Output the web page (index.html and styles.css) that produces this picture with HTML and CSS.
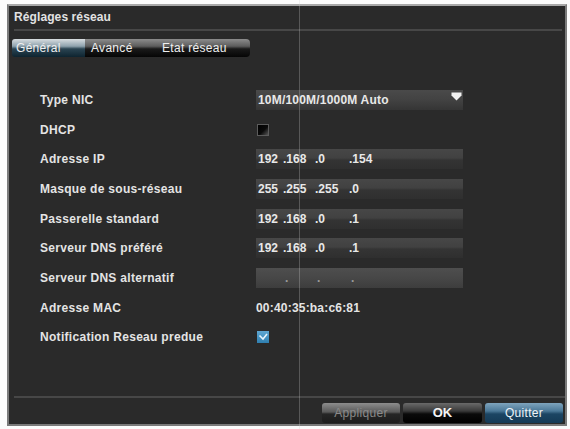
FILE: index.html
```html
<!DOCTYPE html>
<html lang="fr">
<head>
<meta charset="utf-8">
<title>Réglages réseau</title>
<link rel="stylesheet" href="styles.css">
</head>
<body>
<div class="win">
  <div class="title">Réglages réseau</div>
  <div class="sep"></div>
  <div class="tabs">
    <div class="tab tab-active">Général</div>
    <div class="tab tab-2">Avancé</div>
    <div class="tab tab-3">Etat réseau</div>
  </div>
  <div class="form">
    <div class="row">
      <div class="label">Type NIC</div>
      <div class="field select">
        <span>10M/100M/1000M Auto</span>
        <svg class="arrow" width="11" height="9" viewBox="0 0 11 9"><path d="M0.5 0.5 H10.5 V3.5 L5.5 8.5 L0.5 3.5 Z" fill="#f2f2f2"/></svg>
      </div>
    </div>
    <div class="row">
      <div class="label">DHCP</div>
      <div class="value"><span class="check-off"></span></div>
    </div>
    <div class="row">
      <div class="label">Adresse IP</div>
      <div class="field ip"><span class="o1">192</span><span class="o2">.168</span><span class="o3">.0</span><span class="o4">.154</span></div>
    </div>
    <div class="row">
      <div class="label">Masque de sous-réseau</div>
      <div class="field ip"><span class="o1">255</span><span class="o2">.255</span><span class="o3">.255</span><span class="o4">.0</span></div>
    </div>
    <div class="row">
      <div class="label">Passerelle standard</div>
      <div class="field ip"><span class="o1">192</span><span class="o2">.168</span><span class="o3">.0</span><span class="o4">.1</span></div>
    </div>
    <div class="row">
      <div class="label">Serveur DNS préféré</div>
      <div class="field ip"><span class="o1">192</span><span class="o2">.168</span><span class="o3">.0</span><span class="o4">.1</span></div>
    </div>
    <div class="row">
      <div class="label">Serveur DNS alternatif</div>
      <div class="field ip empty"><span class="o1"></span><span class="o2">.</span><span class="o3">.</span><span class="o4">.</span></div>
    </div>
    <div class="row">
      <div class="label">Adresse MAC</div>
      <div class="value mac">00:40:35:ba:c6:81</div>
    </div>
    <div class="row">
      <div class="label">Notification Reseau predue</div>
      <div class="value">
        <span class="check-on"><svg width="12" height="12" viewBox="0 0 12 12"><path d="M2.5 4.5 L6 8 L10 3" fill="none" stroke="#e8f4fb" stroke-width="1.6"/></svg></span>
      </div>
    </div>
  </div>
  <div class="footer">
    <div class="btn btn-apply">Appliquer</div>
    <div class="btn btn-ok">OK</div>
    <div class="btn btn-quit">Quitter</div>
  </div>
</div>
<div class="vline"></div>
</body>
</html>
```
FILE: styles.css
```css
html, body {
  margin: 0;
  padding: 0;
}
body {
  background: #fbfbfb;
  padding: 4px 0 0 7px;
  width: 570px;
  height: 429px;
  box-sizing: border-box;
  font-family: "Liberation Sans", Arial, sans-serif;
  color: #e6e6e6;
  overflow: hidden;
}
.win {
  width: 560px;
  height: 422px;
  box-sizing: border-box;
  border: 2px solid #7a7a7a;
  border-top-color: #a8a8a8;
  background: #2a2a2a;
  display: flex;
  flex-direction: column;
}
.title {
  height: 23px;
  line-height: 23px;
  padding-left: 5px;
  font-size: 12px;
  font-weight: bold;
  letter-spacing: 0.1px;
  color: #e2e2e2;
}
.sep {
  height: 2px;
  margin: 0 3px 0 5px;
  background: #474747;
}
.tabs {
  display: flex;
  margin: 8px 0 0 3px;
  height: 18px;
}
.tab {
  height: 18px;
  line-height: 18px;
  font-size: 12px;
  letter-spacing: 0.3px;
  color: #f0f0f0;
  background: linear-gradient(#8c8c8c 0%, #5c5c5c 40%, #1a1a1a 55%, #050505 100%);
  box-sizing: border-box;
}
.tab-active {
  width: 73px;
  padding-left: 4px;
  background: linear-gradient(#d8dde0 0%, #8fa2ad 40%, #2a4452 55%, #0e2430 100%);
  border-radius: 3px 0 0 3px;
}
.tab-2 {
  width: 68px;
  padding-left: 6px;
}
.tab-3 {
  width: 97px;
  padding-left: 9px;
  border-radius: 0 4px 4px 0;
}
.form {
  flex: 1;
  margin-top: 28px;
  padding-left: 31px;
}
.row {
  display: flex;
  align-items: center;
  height: 29.7px;
}
.label {
  width: 216px;
  font-size: 12px;
  font-weight: bold;
  letter-spacing: 0.3px;
  color: #e4e4e4;
}
.value {
  font-size: 12px;
  color: #e4e4e4;
  display: flex;
  align-items: center;
}
.mac {
  font-weight: bold;
  letter-spacing: 0.2px;
}
.field {
  width: 207px;
  height: 20px;
  box-sizing: border-box;
  display: flex;
  align-items: center;
  font-size: 12px;
  font-weight: bold;
  color: #e8e8e8;
  background: linear-gradient(#474747 0%, #414141 45%, #343434 55%, #2f2f2f 100%);
}
.select {
  justify-content: space-between;
  padding: 0 1px 0 2px;
  background: linear-gradient(#4a4a4a 0%, #424242 50%, #353535 100%);
  letter-spacing: 0.2px;
}
.arrow {
  margin-right: 0;
  align-self: flex-start;
  margin-top: 2px;
}
.ip span {
  display: inline-block;
  white-space: pre;
}
.ip .o1 { width: 25px; padding-left: 2px; }
.ip .o2 { width: 32px; }
.ip .o3 { width: 34px; }
.ip .o4 { width: 40px; }
.empty {
  background: linear-gradient(#4e4e4e 0%, #474747 50%, #3d3d3d 100%);
  color: #9a9a9a;
}
.empty .o1 { width: 25px; }
.empty .o2 { padding-left: 2px; }
.check-off {
  display: inline-block;
  width: 10px;
  height: 10px;
  border: 1px solid #5c5c5c;
  background: linear-gradient(135deg, #000 0%, #0a0a0a 55%, #555 100%);
  margin-left: 1px;
}
.check-on {
  display: inline-block;
  width: 12px;
  height: 12px;
  background: linear-gradient(#5fa7d2, #2f7fb0);
  margin-left: 1px;
}
.check-on svg {
  display: block;
}
.footer {
  height: 28px;
  box-sizing: border-box;
  border-top: 2px solid #474747;
  margin-left: 5px;
  display: flex;
  justify-content: flex-end;
  gap: 3px;
  padding: 5px 2px 0 0;
}
.btn {
  width: 78px;
  height: 20px;
  line-height: 20px;
  text-align: center;
  font-size: 12px;
  border-radius: 3px;
  box-sizing: border-box;
}
.btn-apply {
  color: #8a8a8a;
  background: linear-gradient(#8d8d8d 0%, #5a5a5a 45%, #262626 55%, #1c1c1c 100%);
  letter-spacing: 0.3px;
}
.btn-ok {
  width: 79px;
  color: #f4f4f4;
  font-weight: bold;
  font-size: 13px;
  background: linear-gradient(#6a6a6a 0%, #3a3a3a 40%, #0a0a0a 55%, #000 100%);
}
.btn-quit {
  color: #eef4f8;
  letter-spacing: 0.3px;
  background: linear-gradient(#7ea4bd 0%, #4b7897 40%, #1c4563 55%, #153a56 100%);
}
.vline {
  position: absolute;
  left: 299px;
  top: 0;
  width: 1px;
  height: 429px;
  background: rgba(210, 210, 210, 0.28);
}
```
